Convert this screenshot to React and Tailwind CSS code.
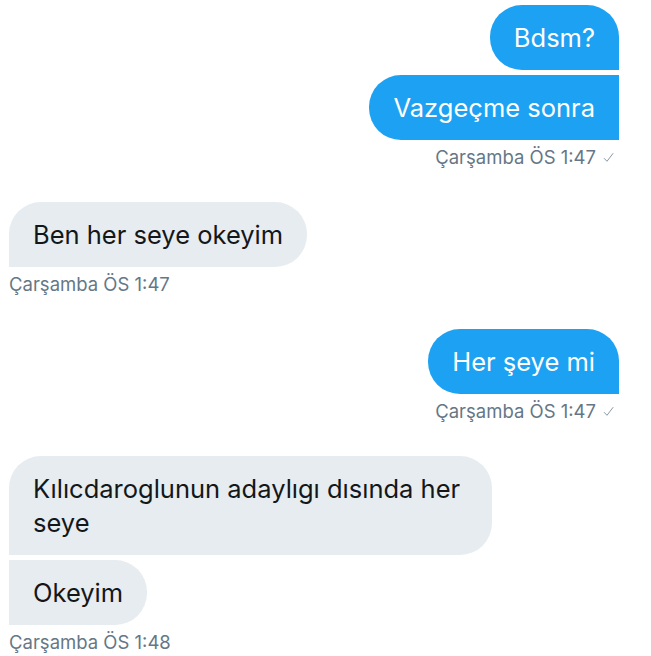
import React from 'react'

const font = { fontFamily: 'Inter, "Liberation Sans", sans-serif' }

function Check() {
  return (
    <svg width="11" height="11" viewBox="0 0 11 11" className="ml-[7px] inline-block">
      <path d="M1 6.2 L4 9.3 L10.2 1.2" fill="none" stroke="#8899a6" strokeWidth="1" />
    </svg>
  )
}

function Stamp({ time, right }) {
  return (
    <div className={`mt-[6px] flex items-center text-[18.5px] leading-[22px] text-[#657786] ${right ? 'justify-end pr-[5px]' : ''}`}>
      <span>Çarşamba ÖS {time}</span>
      {right && <Check />}
    </div>
  )
}

function Bubble({ children, mine, corners }) {
  return (
    <div
      className={`max-w-[483px] px-6 py-[15.5px] text-[25.5px] leading-[34px] ${corners} ${
        mine ? 'bg-[#1da1f2] text-white' : 'bg-[#e6ecf0] text-[#14171a]'
      }`}
    >
      {children}
    </div>
  )
}

export default function App() {
  return (
    <div className="min-h-[656px] w-[651px] bg-white pt-[5px] pl-[9px] pr-[32px]" style={font}>
      <div className="flex flex-col items-end gap-[5px]">
        <Bubble mine corners="rounded-[32px] rounded-br-none">Bdsm?</Bubble>
        <Bubble mine corners="rounded-l-[32px]">Vazgeçme sonra</Bubble>
      </div>
      <Stamp time="1:47" right />

      <div className="mt-[34px] flex flex-col items-start">
        <Bubble corners="rounded-[32px] rounded-bl-none">Ben her seye okeyim</Bubble>
      </div>
      <Stamp time="1:47" />

      <div className="mt-[34px] flex flex-col items-end">
        <Bubble mine corners="rounded-[32px] rounded-br-none">Her şeye mi</Bubble>
      </div>
      <Stamp time="1:47" right />

      <div className="mt-[34px] flex flex-col items-start gap-[5px]">
        <Bubble corners="rounded-[32px] rounded-bl-none">Kılıcdaroglunun adaylıgı dısında her seye</Bubble>
        <Bubble corners="rounded-r-[32px]">Okeyim</Bubble>
      </div>
      <Stamp time="1:48" />
    </div>
  )
}
